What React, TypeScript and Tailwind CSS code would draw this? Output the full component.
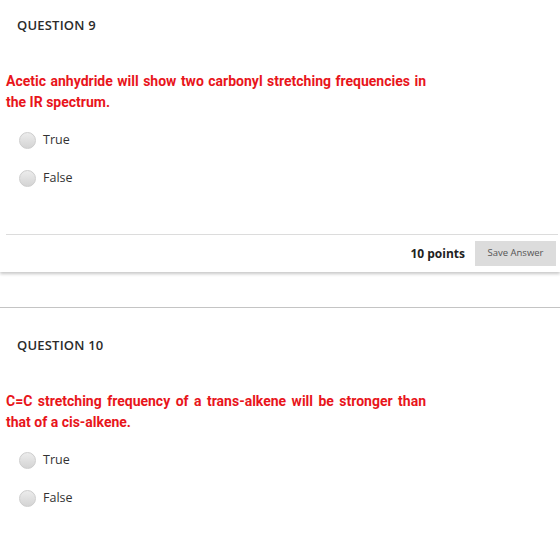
import React from "react";

type Question = {
  number: number;
  text: string;
};

const questions: Question[] = [
  {
    number: 9,
    text: "Acetic anhydride will show two carbonyl stretching frequencies in the IR spectrum.",
  },
  {
    number: 10,
    text: "C=C stretching frequency of a trans-alkene will be stronger than that of a cis-alkene.",
  },
];

function Radio({ label }: { label: string }) {
  return (
    <label className="flex items-center h-[20px]">
      <span className="ml-[19px] w-[17px] h-[17px] rounded-full border border-[#cdcdcd] bg-gradient-to-b from-[#ececec] to-[#d4d4d4] shrink-0" />
      <span className="ml-[7px] text-[12.5px] leading-[20px] text-[#333]">{label}</span>
    </label>
  );
}

function QuestionBody({ q }: { q: Question }) {
  return (
    <>
      <h2 className="pl-[17px] text-[13px] leading-[20px] font-semibold text-[#2b2b2b] tracking-[0.2px]">
        QUESTION {q.number}
      </h2>
      <p
        className="mt-[36px] ml-[6px] w-[420px] text-justify text-[14px] leading-[21px] font-bold text-[#e8151b]"
        style={{ fontFamily: "Roboto, 'Liberation Sans', sans-serif" }}
      >
        {q.text}
      </p>
      <div className="mt-[17px] flex flex-col gap-[18px]">
        <Radio label="True" />
        <Radio label="False" />
      </div>
    </>
  );
}

export default function App() {
  return (
    <div
      className="w-[560px] h-[544px] overflow-hidden bg-white"
      style={{ fontFamily: "'Open Sans', 'Liberation Sans', sans-serif" }}
    >
      <section className="bg-white pt-[15px] shadow-[0_2px_3px_rgba(0,0,0,0.22)] relative">
        <QuestionBody q={questions[0]} />
        <div className="mt-[46px] ml-[6px] mr-[2px] border-t border-[#dcdcdc]" />
        <div className="flex items-center justify-end h-[37px] pr-[4px]">
          <span className="text-[12px] font-bold text-[#222]">10 points</span>
          <button className="ml-[10px] w-[81px] h-[25px] bg-[#dcdcdc] text-[9.5px] text-[#555]">
            Save Answer
          </button>
        </div>
      </section>
      <section className="mt-[35px] border-t border-[#c4c4c4] pt-[27px]">
        <QuestionBody q={questions[1]} />
      </section>
    </div>
  );
}
